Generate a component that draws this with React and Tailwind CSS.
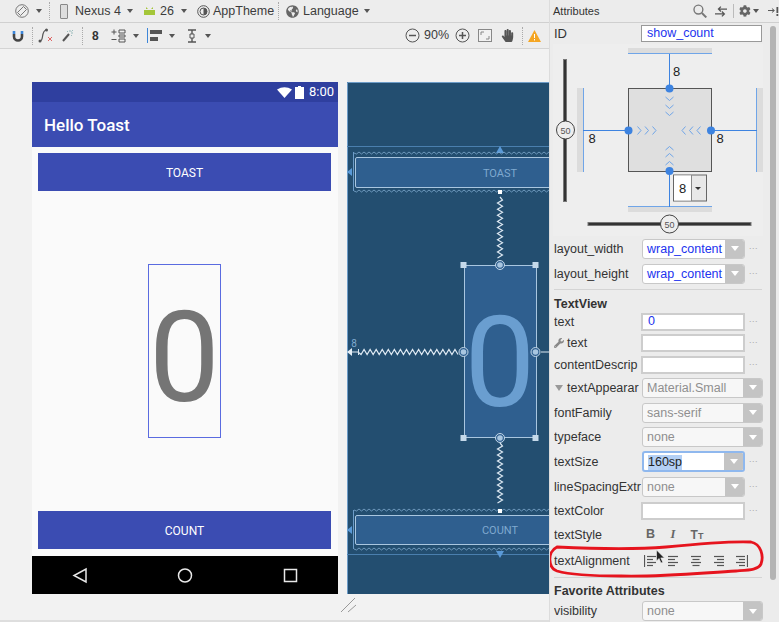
import React from 'react';
import { FaCog, FaGlobeAmericas, FaHandPaper, FaWrench } from 'react-icons/fa';

const sans = 'font-["Liberation_Sans",Arial,sans-serif]';

// zigzag line used for the blueprint constraints
function zig(x1, y1, x2, y2, amp = 2.5, step = 3) {
  const horiz = y1 === y2;
  const len = horiz ? x2 - x1 : y2 - y1;
  const n = Math.floor(len / step);
  let d = `M${x1} ${y1}`;
  for (let i = 1; i <= n; i++) {
    const off = i % 2 ? amp : -amp;
    const p = (len * i) / n;
    d += horiz ? ` L${x1 + p} ${y1 + off}` : ` L${x1 + off} ${y1 + p}`;
  }
  return d;
}

function Caret({ className = 'ml-[7px]' }) {
  return <span className={`${className} shrink-0 w-0 h-0 border-l-[3px] border-r-[3px] border-t-[4px] border-l-transparent border-r-transparent border-t-[#555]`}></span>;
}

function Sep({ className }) {
  return <span className={`${className} shrink-0 h-[18px] border-l border-dotted border-[#aaa]`}></span>;
}

function TopBar() {
  return (
    <div className={`h-[23px] flex items-center whitespace-nowrap border-b border-[#d0d0d0] bg-[#ededed] text-[12.5px] text-[#3c3c3c] ${sans}`}>
      <svg className="ml-[15px] shrink-0" width="14" height="14" viewBox="0 0 14 14" fill="none" stroke="#777">
        <circle cx="7" cy="7" r="6.3" />
        <path d="M2.5 8.5 8.5 2.5 11.5 5.5 5.5 11.5Z" fill="#ededed" />
      </svg>
      <Caret className="ml-[7px]" />
      <Sep className="ml-[7px]" />
      <span className="ml-[10px] shrink-0 w-[8px] h-[15px] rounded-[1px] border border-[#888] bg-[#ddd]"></span>
      <span className="ml-[7px] w-[47px] shrink-0">Nexus 4</span>
      <Caret className="ml-[5px]" />
      <svg className="ml-[11px] shrink-0" width="11" height="8" viewBox="0 0 11 8" fill="#a4c639">
        <path d="M0 3h11v5H0zM2 0l2 2H2zM9 0 7 2h2z" />
      </svg>
      <span className="ml-[5px] w-[14px] shrink-0">26</span>
      <Caret className="ml-[7px]" />
      <svg className="ml-[10px] shrink-0" width="13" height="13" viewBox="0 0 13 13">
        <circle cx="6.5" cy="6.5" r="5.8" fill="#eee" stroke="#555" />
        <path d="M6.5 3a3.5 3.5 0 0 1 0 7Z" fill="#555" />
        <circle cx="6.5" cy="6.5" r="3.5" fill="none" stroke="#555" />
      </svg>
      <span className="ml-[3px] w-[62px] shrink-0">AppTheme</span>
      <Sep className="ml-[3px]" />
      <FaGlobeAmericas className="ml-[7px] shrink-0 text-[#666]" size={13} />
      <span className="ml-[4px] w-[56px] shrink-0">Language</span>
      <Caret className="ml-[5px]" />
    </div>
  );
}

function SecondBar() {
  return (
    <div className={`h-[26px] flex items-center whitespace-nowrap border-b border-[#d4d4d4] bg-[#ededed] text-[12.5px] text-[#3c3c3c] ${sans}`}>
      <svg className="ml-[12px] shrink-0" width="12" height="12" viewBox="0 0 12 12" fill="none">
        <path d="M2 4v2.5a4 4 0 0 0 8 0V4" stroke="#444" strokeWidth="2.6" />
        <path d="M.7 1h2.6v3H.7zM8.700 1h2.600v3H8.700z" fill="#3d86d8" />
      </svg>
      <Sep className="ml-[8px]" />
      <svg className="ml-[5px] shrink-0" width="15" height="15" viewBox="0 0 15 15" fill="none">
        <path d="M2 13C6 13 3 3 8 2" stroke="#555" strokeWidth="1.2" />
        <circle cx="2" cy="13" r="1.500" fill="#555" />
        <circle cx="8.500" cy="2" r="1.500" fill="#555" />
        <path d="M10 9l4 4M14 9l-4 4" stroke="#d66" />
      </svg>
      <svg className="ml-[9px] shrink-0" width="12" height="13" viewBox="0 0 12 13" fill="none">
        <path d="M1 12 7 5" stroke="#555" strokeWidth="2" />
        <path d="M8 1v2M11 4H9M11 1 9.500 2.500M5 2l1 1M10 7 9 6" stroke="#9bb" />
      </svg>
      <Sep className="ml-[8px]" />
      <span className="ml-[9px] w-[8px] shrink-0 text-[12px] font-bold text-[#333]">8</span>
      <svg className="ml-[11px] shrink-0" width="15" height="14" viewBox="0 0 15 14" fill="none" stroke="#555">
        <path d="M3 .5v5M.5 3h5M.5 10.500h5" />
        <path d="M8 1h6v3H8zM8 6h6v2H8zM8 10h6v3H8z" />
      </svg>
      <Caret className="ml-[7px]" />
      <svg className="ml-[8px] shrink-0" width="16" height="15" viewBox="0 0 16 15">
        <path d="M0 0h1v15H0z" fill="#3d86d8" />
        <path d="M3 2h12v4H3zM3 9h8v4H3z" fill="#555" />
      </svg>
      <Caret className="ml-[6px]" />
      <svg className="ml-[11px] shrink-0" width="12" height="14" viewBox="0 0 12 14" fill="none" stroke="#555">
        <path d="M2 1h8M2 13h8M6 1v12" strokeWidth="1.400" />
        <path d="M4 5h4v4H4z" fill="#ededed" />
      </svg>
      <Caret className="ml-[7px]" />
      <svg className="ml-[194px] shrink-0" width="15" height="15" viewBox="0 0 15 15" fill="none" stroke="#555">
        <circle cx="7.500" cy="7.500" r="6.500" />
        <path d="M4 7.500h7" strokeWidth="1.500" />
      </svg>
      <span className="ml-[4px] w-[26px] shrink-0">90%</span>
      <svg className="ml-[5px] shrink-0" width="15" height="15" viewBox="0 0 15 15" fill="none" stroke="#555">
        <circle cx="7.500" cy="7.500" r="6.500" />
        <path d="M4 7.500h7M7.500 4v7" strokeWidth="1.500" />
      </svg>
      <svg className="ml-[8px] shrink-0" width="14" height="13" viewBox="0 0 14 13" fill="#f1f1f1" stroke="#888">
        <rect x=".5" y=".5" width="13" height="12" />
        <path d="M3 6V3h3M11 7v3H8" fill="none" />
      </svg>
      <FaHandPaper className="ml-[9px] shrink-0 text-[#555]" size={13} />
      <Sep className="ml-[8px]" />
      <svg className="ml-[5px] shrink-0" width="13" height="12" viewBox="0 0 13 12">
        <path d="M6.500 0 13 12H0Z" fill="#f5a623" />
        <path d="M6 4h1v4H6zM6 9h1v1.500H6z" fill="#fff" />
      </svg>
    </div>
  );
}

function Phone() {
  return (
    <div className={`w-[306px] h-[512px] shrink-0 flex flex-col ${'font-["Roboto",sans-serif]'}`}>
      <div className="h-[20px] bg-[#2f3f9f] flex items-center justify-end text-white text-[13px] pr-[4px]">
        <svg width="15" height="11" viewBox="0 0 15 11" fill="#fff"><path d="M0 2.500Q7.500-2 15 2.500L7.500 11Z" /></svg>
        <svg className="ml-[3px]" width="9" height="13" viewBox="0 0 9 13" fill="#fff"><path d="M3 0h3v1h3v12H0V1h3z" /></svg>
        <span className="ml-[5px]">8:00</span>
      </div>
      <div className="h-[45px] bg-[#3b4cb2] flex items-center pl-[12px] pt-[2px] text-white text-[17px] font-medium">Hello Toast</div>
      <div className="flex-1 bg-[#fafafa] flex flex-col px-[6px] pt-[6px] pb-[7px]">
        <div className="h-[38px] mr-[1px] pt-[1px] bg-[#3b4cb2] flex items-center justify-center text-white text-[12px]">TOAST</div>
        <div className="flex-1 flex items-center justify-center pr-[1px]">
          <div className="w-[73px] h-[174px] border border-[#5a6be0] flex items-center justify-center pt-[13px] text-[126px] leading-none text-[#757575]">0</div>
        </div>
        <div className="h-[38px] mr-[1px] pt-[1px] bg-[#3b4cb2] flex items-center justify-center text-white text-[12px]">COUNT</div>
      </div>
      <div className="h-[38px] bg-black flex items-center">
        <svg width="306" height="38" viewBox="0 0 306 38" fill="none" stroke="#e8e8e8" strokeWidth="1.500">
          <path d="M54 13v13L42 19.500Z" />
          <circle cx="153" cy="19.500" r="6.500" />
          <rect x="252.500" y="13.500" width="12" height="12" />
        </svg>
      </div>
    </div>
  );
}

function Blueprint() {
  const wave = '#7fa9cf';
  return (
    <div className="ml-[9px] w-[202px] h-[512px] shrink-0 overflow-hidden bg-[#234e70]">
      <svg width="202" height="512" viewBox="347 82 202 512" fontFamily="Roboto, sans-serif">
        <path d="M347.500 594V82.500H549" stroke="#6d9cc8" fill="none" />
        <path d="M347 146.500h202M347 554.500h202" stroke="#4a7fae" />
        <path d="M500 146l-4 7h8Z M500 558l-4-7h8Z" fill="#5a9ad8" />
        <path d="M347 172l5-4v8Z M347 530l5-4v8Z" fill="#5a9ad8" />

        <path d={zig(354, 153, 549, 153, 1, 2.500)} stroke={wave} fill="none" strokeWidth=".8" />
        <path d={zig(354, 191, 549, 191, 1, 2.500)} stroke={wave} fill="none" strokeWidth=".8" />
        <path d="M353.500 152v39" stroke="#6d9cc8" />
        <rect x="355.500" y="157.500" width="210" height="30" rx="1.500" fill="#2f5f8f" stroke="#a9c6e0" />
        <text x="500" y="177" textAnchor="middle" fontSize="11" fill="#7fa9cf">TOAST</text>

        <path d={zig(354, 510, 549, 510, 1, 2.500)} stroke={wave} fill="none" strokeWidth=".8" />
        <path d={zig(354, 549, 549, 549, 1, 2.500)} stroke={wave} fill="none" strokeWidth=".8" />
        <path d="M353.500 510v39" stroke="#6d9cc8" />
        <rect x="355.500" y="515.500" width="210" height="29" rx="1.500" fill="#2f5f8f" stroke="#a9c6e0" />
        <text x="500" y="534" textAnchor="middle" fontSize="11" fill="#7fa9cf">COUNT</text>

        <rect x="464.500" y="265.500" width="72" height="172" fill="#2f5f8f" stroke="#a9c6e0" />
        <text x="500" y="406" textAnchor="middle" fontSize="126" fill="#6a9ed0">0</text>

        <path d={zig(500, 197, 500, 258)} stroke="#dde8f2" fill="none" strokeWidth="1.200" />
        <path d={zig(500, 443, 500, 503)} stroke="#dde8f2" fill="none" strokeWidth="1.200" />
        <path d={zig(358, 352, 458, 352)} stroke="#dde8f2" fill="none" strokeWidth="1.200" />
        <path d="M347 352l5-4v8Z" fill="#e4edf5" />
        <path d="M352 352h6M358.500 349v6" stroke="#dde8f2" />
        <path d="M541 352h8" stroke="#dde8f2" />
        <text x="354" y="347" textAnchor="middle" fontSize="10" fill="#7fa9cf">8</text>

        <rect x="498" y="190" width="4" height="4" fill="#fff" />
        <rect x="498" y="509" width="4" height="4" fill="#fff" />
        {[[460.500, 262], [532.500, 262], [460.500, 435], [532.500, 435]].map(([x, y]) => (
          <rect key={x + '-' + y} x={x} y={y} width="6" height="6" fill="#c5d9ea" />
        ))}
        {[[500, 265], [500, 438], [463.500, 352], [535.500, 352]].map(([x, y]) => (
          <g key={x + '-' + y}>
            <circle cx={x} cy={y} r="4.500" fill="#2f5f8f" stroke="#c5d9ea" />
            <circle cx={x} cy={y} r="2.800" fill="#a9c6e0" />
          </g>
        ))}
      </svg>
    </div>
  );
}

function Chevrons({ d }) {
  return <path d={d} fill="none" stroke="#6fa5e8" strokeWidth="1" />;
}

function Widget() {
  const blue = '#3d83e0';
  const num = { fontSize: 13, fill: '#222', textAnchor: 'middle', fontFamily: 'Liberation Sans, sans-serif' };
  return (
    <svg className="ml-[3px] block" width="210" height="192" viewBox="553 44 210 192">
      <rect x="553" y="44" width="210" height="192" fill="#eeeeee" />
      <rect x="628" y="48" width="84" height="5" fill="#dcdcdc" />
      <rect x="628" y="207" width="84" height="5" fill="#dcdcdc" />
      <rect x="577" y="88" width="6" height="84" fill="#dcdcdc" />
      <rect x="757" y="88" width="6" height="84" fill="#dcdcdc" />
      <path d="M628 53.500h84M628 206.500h84M583.500 88v84M756.500 88v84" stroke="#6fa5e8" />
      <rect x="628.500" y="88.500" width="83" height="83" fill="#dfdfdf" stroke="#555" />
      <path d="M669.500 54v34M669.500 171v36M583 130.500h45M711 130.500h46" stroke={blue} />
      <circle cx="669.500" cy="88.500" r="4" fill={blue} />
      <circle cx="669.500" cy="171" r="4" fill={blue} />
      <circle cx="628.500" cy="130.500" r="4" fill={blue} />
      <circle cx="711" cy="130.500" r="4" fill={blue} />
      <Chevrons d="M665.500 97l4 3.500 4-3.500M665.500 105l4 3.500 4-3.500M665.500 112l4 3.500 4-3.500" />
      <Chevrons d="M665.500 150l4-3.500 4 3.500M665.500 157l4-3.500 4 3.500M665.500 165l4-3.500 4 3.500" />
      <Chevrons d="M637.500 126.500l3.500 4-3.500 4M645 126.500l3.500 4-3.500 4M652.500 126.500l3.500 4-3.500 4" />
      <Chevrons d="M685.500 126.500l-3.500 4 3.500 4M693 126.500l-3.500 4 3.500 4M700.500 126.500l-3.500 4 3.500 4" />
      <text x="676.500" y="76" {...num}>8</text>
      <text x="592" y="143" {...num}>8</text>
      <text x="720" y="143" {...num}>8</text>
      <rect x="673.500" y="175" width="33" height="26" fill="#e8e8e8" stroke="#666" />
      <rect x="674" y="175.500" width="17.500" height="25" fill="#fff" />
      <path d="M691.500 175v26" stroke="#888" />
      <path d="M695 187h6l-3 3Z" fill="#333" />
      <text x="679" y="193" {...num} textAnchor="start">8</text>
      <rect x="563.500" y="59.500" width="3" height="142" fill="#333" stroke="#777" />
      <circle cx="565.500" cy="130" r="9" fill="#eee" stroke="#444" />
      <text x="565.500" y="133.500" fontSize="9" textAnchor="middle" fill="#555" fontFamily="Liberation Sans, sans-serif">50</text>
      <rect x="588" y="222.500" width="163" height="3" fill="#333" stroke="#777" />
      <circle cx="669.500" cy="224" r="9" fill="#eee" stroke="#444" />
      <text x="669.500" y="227.500" fontSize="9" textAnchor="middle" fill="#555" fontFamily="Liberation Sans, sans-serif">50</text>
    </svg>
  );
}

function Dots() {
  return <span className="ml-[4px] w-[10px] text-[9px] leading-none text-[#aaa] tracking-[0.5px] -mt-[4px]">...</span>;
}

function DropValue({ value, muted, wide, focus }) {
  return (
    <div className={`${wide ? 'w-[121px]' : 'w-[103px]'} shrink-0 flex rounded-[3px] overflow-hidden ${focus ? 'border-2 border-[#8fb8ee] h-[21px]' : 'border border-[#c8c8c8] h-[20px]'} ${muted ? 'bg-[#f7f7f7]' : 'bg-white'}`}>
      <div className={`flex-1 flex items-center pl-[4px] pt-[1px] ${muted ? 'text-[#8f8f8f]' : 'text-[#2233ee]'}`}>
        {focus ? <span className="bg-[#b4d0f5] text-[#222] leading-[15px]">{value}</span> : value}
      </div>
      <div className="w-[19px] bg-[#c4c4c4] flex items-center justify-center">
        <span className="w-0 h-0 border-l-[4px] border-r-[4px] border-t-[5px] border-l-transparent border-r-transparent border-t-white"></span>
      </div>
    </div>
  );
}

function TextValue({ value }) {
  return (
    <div className="-ml-[1px] w-[104px] h-[18px] shrink-0 border-2 border-[#cdcdcd] bg-white flex items-center pl-[5px] text-[#2233ee]">{value}</div>
  );
}

function Row({ h, label, children, indent }) {
  return (
    <div className={`${h} flex items-center pl-[4px]`}>
      <div className="w-[88px] pt-[1px] shrink-0 overflow-hidden whitespace-nowrap flex items-center">
        {indent}
        {label}
      </div>
      {children}
    </div>
  );
}

function AlignIcon({ lines, bar, className }) {
  return (
    <svg className={className} width="12" height="12" viewBox="0 0 12 12" stroke="#555" strokeWidth="1.200">
      {bar === 'left' && <path d="M.5 0v12" />}
      {bar === 'right' && <path d="M11.500 0v12" />}
      {lines.map(([a, b], i) => <path key={i} d={`M${a} ${1.5 + i * 3}H${b}`} />)}
    </svg>
  );
}

function Attributes() {
  return (
    <div className={`relative w-[230px] shrink-0 h-[622px] border-l border-[#dcdcdc] bg-[#ececec] text-[12.5px] text-[#333] ${sans}`}>
      <div className="h-[23px] flex items-center border-b border-[#cfcfcf] text-[11px]">
        <span className="ml-[3px] w-[142px]">Attributes</span>
        <svg width="14" height="14" viewBox="0 0 14 14" fill="none" stroke="#777" strokeWidth="1.400">
          <circle cx="5.500" cy="5.500" r="4.500" />
          <path d="M9 9l4.500 4.500" strokeWidth="2" />
        </svg>
        <svg className="ml-[8px]" width="13" height="11" viewBox="0 0 13 11" fill="none" stroke="#555" strokeWidth="1.300">
          <path d="M13 3H4M6 .5 3.500 3 6 5.500M0 8h9M7 5.500 9.500 8 7 10.500" />
        </svg>
        <span className="ml-[6px] h-[14px] border-l border-[#bbb]"></span>
        <FaCog className="ml-[5px] text-[#666]" size={12} />
        <Caret className="ml-[2px]" />
        <svg className="ml-[9px]" width="11" height="9" viewBox="0 0 11 9" fill="none" stroke="#555">
          <path d="M0 3.500h6M4 1.500 6.500 3.500 4 5.500" />
          <path d="M9.500 0v6M9.500 7v2" strokeWidth="1.800" />
        </svg>
      </div>
      <div className="flex">
        <div className="w-[218px]">
          <div className="h-[21px] flex items-center pl-[4px]">
            <span className="w-[87px] text-[13px]">ID</span>
            <div className="w-[121px] h-[17px] border border-[#999] bg-white flex items-center pl-[5px] text-[#2233ee]">show_count</div>
          </div>
          <Widget />
          <Row h="h-[25px]" label="layout_width"><DropValue value="wrap_content" /><Dots /></Row>
          <Row h="h-[25px]" label="layout_height"><DropValue value="wrap_content" /><Dots /></Row>
          <div className="mt-[3px] ml-[4px] w-[208px] border-t border-[#d4d4d4]"></div>
          <div className="h-[22px] pl-[4px] pt-[6px] font-bold leading-[16px]">TextView</div>
          <Row h="h-[19px]" label="text"><TextValue value="0" /><Dots /></Row>
          <Row h="h-[23px]" label="text" indent={<FaWrench className="mr-[3px] text-[#888]" size={10} />}><TextValue /><Dots /></Row>
          <Row h="h-[21px]" label="contentDescrip"><TextValue /><Dots /></Row>
          <Row h="h-[25px]" label="textAppearar" indent={<span className="ml-[1px] mr-[4px] shrink-0 w-0 h-0 border-l-[4px] border-r-[4px] border-t-[6px] border-l-transparent border-r-transparent border-t-[#999]"></span>}><DropValue value="Material.Small" muted wide /></Row>
          <Row h="h-[25px]" label="fontFamily"><DropValue value="sans-serif" muted wide /></Row>
          <Row h="h-[24px]" label="typeface"><DropValue value="none" muted wide /></Row>
          <Row h="h-[25px]" label="textSize"><DropValue value="160sp" focus /><Dots /></Row>
          <Row h="h-[25px]" label="lineSpacingExtr"><DropValue value="none" muted /><Dots /></Row>
          <Row h="h-[23px]" label="textColor"><TextValue /><Dots /></Row>
          <Row h="h-[25px]" label="textStyle">
            <span className="ml-[3px] w-[11px] font-bold text-[#666] text-center">B</span>
            <span className="ml-[12px] w-[10px] font-bold italic text-[#666] font-['Liberation_Serif',serif] text-center">I</span>
            <span className="ml-[12px] w-[14px] font-bold text-[#666] text-[12px] text-center">T<span className="text-[9px]">T</span></span>
          </Row>
          <Row h="h-[27px]" label="textAlignment">
            <AlignIcon className="ml-[2px]" bar="left" lines={[[3, 12], [3, 9], [3, 12], [3, 9]]} />
            <AlignIcon className="ml-[11px]" lines={[[1, 11], [1, 8], [1, 11], [1, 8]]} />
            <AlignIcon className="ml-[11px]" lines={[[1, 11], [2.5, 9.5], [1, 11], [2.5, 9.5]]} />
            <AlignIcon className="ml-[11px]" lines={[[1, 11], [4, 11], [1, 11], [4, 11]]} />
            <AlignIcon className="ml-[11px]" bar="right" lines={[[0, 9], [3, 9], [0, 9], [3, 9]]} />
          </Row>
          <div className="mt-[3px] ml-[4px] w-[208px] border-t border-[#d4d4d4]"></div>
          <div className="h-[22px] pl-[4px] pt-[5px] font-bold leading-[16px]">Favorite Attributes</div>
          <Row h="h-[22px]" label="visibility"><DropValue value="none" muted wide /></Row>
        </div>
        <div className="w-[11px] pl-[2px] pt-[3px]">
          <div className="w-[6px] h-[554px] rounded-[3px] bg-[#b4b4b4]"></div>
        </div>
      </div>

      {/* red hand drawn marker + mouse pointer */}
      <svg className="absolute left-0 top-0 pointer-events-none" width="230" height="622" viewBox="549 0 230 622" fill="none">
        <path d="M556 547C600 549 640 549 665 547C695 544 725 541 750 542C760 544 763 556 760 564C757 570 748 570 735 571C700 573 660 577 620 576C595 576 570 575 556 571C547 568 546 552 556 547Z" stroke="#e6141e" strokeWidth="2.800" />
        <path d="M655.500 550v11l2.500-2.500 2 4.500 1.800-.8-2-4.300h3.600Z" fill="#222" stroke="#eee" strokeWidth=".6" />
      </svg>
    </div>
  );
}

export default function App() {
  return (
    <div className="w-[779px] h-[622px] overflow-hidden flex bg-[#f2f2f2]">
      <div className="w-[549px] shrink-0 flex flex-col">
        <TopBar />
        <SecondBar />
        <div className="relative flex-1 bg-[#f2f2f2] border-b-2 border-[#dedede] pl-[32px] pt-[33px] flex items-start">
          <Phone />
          <Blueprint />
          <svg className="absolute left-[340px] top-[548px]" width="18" height="16" viewBox="0 0 18 16" stroke="#999" fill="none">
            <path d="M1 15 15 1M8 15 16 8" />
          </svg>
        </div>
      </div>
      <Attributes />
    </div>
  );
}
